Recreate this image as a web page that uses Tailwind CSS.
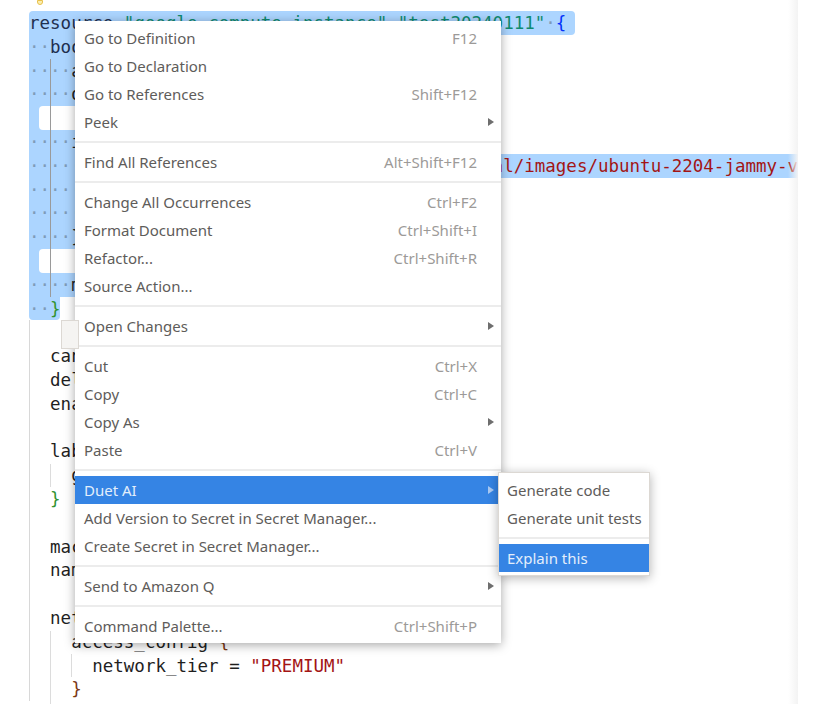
<!DOCTYPE html>
<html lang="en">
  <head>
    <meta charset="UTF-8" />
    <meta name="viewport" content="width=device-width, initial-scale=1.0" />
    <script src="https://cdn.jsdelivr.net/npm/@tailwindcss/browser@4"></script>
    <title>Context menu</title>
  </head>
  <body class="bg-white">
    <div class="relative h-[704px] w-[814px] overflow-hidden bg-white">
      <!-- lightbulb -->
      <div class="absolute left-[37px] top-0 h-[5px] w-[6px] rounded-b-sm border border-[#e8c04a] bg-[#fbeeb0]"></div>

      <!-- editor -->
      <div class="relative ml-[29px] h-[704px] w-[769px] pt-[11px] font-['DejaVu_Sans_Mono',monospace] text-[17.5px] leading-[25px] text-[#1f1f1f]">
        <div class="h-[23.8px] w-[546px] whitespace-pre rounded-t-sm rounded-r-sm bg-[#acd5ff]"><span class="text-[#1f2f4f]">resource</span><span class="text-[#7f9bb8]">·</span><span class="text-[#0f8a6f]">"google_compute_instance"</span><span class="text-[#7f9bb8]">·</span><span class="text-[#0f8a6f]">"test20240111"</span><span class="text-[#7f9bb8]">·</span><span class="text-[#0431fa]">{</span></div>
        <div class="h-[23.8px] w-[460px] whitespace-pre bg-[#acd5ff]"><span class="text-[#7f9bb8]">··</span><span class="text-[#1f2f4f]">boot_disk</span></div>
        <div class="h-[23.8px] w-[460px] whitespace-pre bg-[#acd5ff]"><span class="text-[#7f9bb8]">····</span>auto_delete</div>
        <div class="h-[23.8px] w-[460px] whitespace-pre bg-[#acd5ff]"><span class="text-[#7f9bb8]">····</span>device_name</div>
        <div class="relative h-[23.8px] w-[460px] whitespace-pre bg-[#acd5ff]"><div class="absolute left-[10px] top-0 h-[23.8px] w-[60px] rounded-l-sm bg-white"></div></div>
        <div class="h-[23.8px] w-[460px] whitespace-pre bg-[#acd5ff]"><span class="text-[#7f9bb8]">····</span>initialize_params</div>
        <div class="h-[23.8px] w-[769px] overflow-hidden whitespace-pre bg-[#acd5ff]"><span class="text-[#7f9bb8]">······</span>image = <span class="text-[#a31515]">"projects/ubuntu-os-cloud/global/images/ubuntu-2204-jammy-v</span></div>
        <div class="h-[23.8px] w-[460px] whitespace-pre bg-[#acd5ff]"><span class="text-[#7f9bb8]">······</span>size</div>
        <div class="h-[23.8px] w-[460px] whitespace-pre bg-[#acd5ff]"><span class="text-[#7f9bb8]">······</span>type</div>
        <div class="h-[23.8px] w-[460px] whitespace-pre bg-[#acd5ff]"><span class="text-[#7f9bb8]">····</span>}</div>
        <div class="relative h-[23.8px] w-[460px] whitespace-pre bg-[#acd5ff]"><div class="absolute left-[10px] top-0 h-[23.8px] w-[60px] rounded-l-sm bg-white"></div></div>
        <div class="h-[23.8px] w-[460px] whitespace-pre bg-[#acd5ff]"><span class="text-[#7f9bb8]">····</span>mode</div>
        <div class="h-[23.8px] w-[31px] whitespace-pre rounded-b-sm bg-[#acd5ff]"><span class="text-[#7f9bb8]">··</span><span class="text-[#319331]">}</span></div>
        <div class="h-[23.8px] whitespace-pre border-l border-[#d8d8d8] indent-[-1px]"></div>
        <div class="h-[23.8px] whitespace-pre border-l border-[#d8d8d8] indent-[-1px]">  can_ip_forward = false</div>
        <div class="h-[23.8px] whitespace-pre border-l border-[#d8d8d8] indent-[-1px]">  deletion_protection = false</div>
        <div class="h-[23.8px] whitespace-pre border-l border-[#d8d8d8] indent-[-1px]">  enable_display = false</div>
        <div class="h-[23.8px] whitespace-pre border-l border-[#d8d8d8] indent-[-1px]"></div>
        <div class="h-[23.8px] whitespace-pre border-l border-[#d8d8d8] indent-[-1px]">  labels = {</div>
        <div class="h-[23.8px] whitespace-pre border-l border-[#d8d8d8] indent-[-1px]">    goog-ec-src = "vm_add-tf"</div>
        <div class="h-[23.8px] whitespace-pre border-l border-[#d8d8d8] indent-[-1px]">  <span class="text-[#319331]">}</span></div>
        <div class="h-[23.8px] whitespace-pre border-l border-[#d8d8d8] indent-[-1px]"></div>
        <div class="h-[23.8px] whitespace-pre border-l border-[#d8d8d8] indent-[-1px]">  machine_type = "e2-medium"</div>
        <div class="h-[23.8px] whitespace-pre border-l border-[#d8d8d8] indent-[-1px]">  name = "test20240111"</div>
        <div class="h-[23.8px] whitespace-pre border-l border-[#d8d8d8] indent-[-1px]"></div>
        <div class="h-[23.8px] whitespace-pre border-l border-[#d8d8d8] indent-[-1px]">  network_interface {</div>
        <div class="h-[23.8px] whitespace-pre border-l border-[#d8d8d8] indent-[-1px]">    access_config <span class="text-[#7b3814]">{</span></div>
        <div class="h-[23.8px] whitespace-pre border-l border-[#d8d8d8] indent-[-1px]">      network_tier = <span class="text-[#a31515]">"PREMIUM"</span></div>
        <div class="h-[23.8px] whitespace-pre border-l border-[#d8d8d8] indent-[-1px]">    <span class="text-[#7b3814]">}</span></div>

        <!-- indent guides -->
        <div class="absolute left-[21px] top-[59px] h-[238px] w-px bg-[#9a9a9a]"></div>
        <div class="absolute left-[21px] top-[464px] h-[23px] w-px bg-[#dcdcdc]"></div>
        <div class="absolute left-[21px] top-[631px] h-[73px] w-px bg-[#dcdcdc]"></div>
        <div class="absolute left-[42px] top-[654px] h-[23px] w-px bg-[#dcdcdc]"></div>

        <!-- right edge -->
        <div class="absolute right-0 top-0 h-[704px] w-[10px] bg-linear-to-r from-transparent to-[#f3f3f3]"></div>
      </div>

      <!-- folded block widget -->
      <div class="absolute left-[60px] top-[297px] h-[24px] w-[20px] rounded-tl-sm bg-white"></div>

      <!-- context menu -->
      <div class="absolute left-[75px] top-[21px] w-[426px] bg-white py-[3px] font-['Noto_Sans',sans-serif] text-[15px] text-[#5e5c5a] shadow-[0_2px_10px_rgba(0,0,0,0.35)]">
        <div class="flex h-7 items-center justify-between pl-[9px] pr-6"><span>Go to Definition</span><span class="text-[#9c9a98]">F12</span></div>
        <div class="flex h-7 items-center justify-between pl-[9px] pr-6"><span>Go to Declaration</span></div>
        <div class="flex h-7 items-center justify-between pl-[9px] pr-6"><span>Go to References</span><span class="text-[#9c9a98]">Shift+F12</span></div>
        <div class="flex h-7 items-center justify-between pl-[9px] pr-[7px]"><span>Peek</span><svg width="6" height="8" viewBox="0 0 6 8"><path d="M0 0L6 4L0 8Z" fill="#6e6e6e" /></svg></div>
        <div class="my-[5px] h-0.5 bg-[#ececec]"></div>
        <div class="flex h-7 items-center justify-between pl-[9px] pr-6"><span>Find All References</span><span class="text-[#9c9a98]">Alt+Shift+F12</span></div>
        <div class="my-[5px] h-0.5 bg-[#ececec]"></div>
        <div class="flex h-7 items-center justify-between pl-[9px] pr-6"><span>Change All Occurrences</span><span class="text-[#9c9a98]">Ctrl+F2</span></div>
        <div class="flex h-7 items-center justify-between pl-[9px] pr-6"><span>Format Document</span><span class="text-[#9c9a98]">Ctrl+Shift+I</span></div>
        <div class="flex h-7 items-center justify-between pl-[9px] pr-6"><span>Refactor...</span><span class="text-[#9c9a98]">Ctrl+Shift+R</span></div>
        <div class="flex h-7 items-center justify-between pl-[9px] pr-6"><span>Source Action...</span></div>
        <div class="my-[5px] h-0.5 bg-[#ececec]"></div>
        <div class="flex h-7 items-center justify-between pl-[9px] pr-[7px]"><span>Open Changes</span><svg width="6" height="8" viewBox="0 0 6 8"><path d="M0 0L6 4L0 8Z" fill="#6e6e6e" /></svg></div>
        <div class="my-[5px] h-0.5 bg-[#ececec]"></div>
        <div class="flex h-7 items-center justify-between pl-[9px] pr-6"><span>Cut</span><span class="text-[#9c9a98]">Ctrl+X</span></div>
        <div class="flex h-7 items-center justify-between pl-[9px] pr-6"><span>Copy</span><span class="text-[#9c9a98]">Ctrl+C</span></div>
        <div class="flex h-7 items-center justify-between pl-[9px] pr-[7px]"><span>Copy As</span><svg width="6" height="8" viewBox="0 0 6 8"><path d="M0 0L6 4L0 8Z" fill="#6e6e6e" /></svg></div>
        <div class="flex h-7 items-center justify-between pl-[9px] pr-6"><span>Paste</span><span class="text-[#9c9a98]">Ctrl+V</span></div>
        <div class="my-[5px] h-0.5 bg-[#ececec]"></div>
        <div class="flex h-7 items-center justify-between bg-[#3584e4] pl-[9px] pr-[7px] text-[#e3eefb]"><span>Duet AI</span><svg width="6" height="8" viewBox="0 0 6 8"><path d="M0 0L6 4L0 8Z" fill="#a9c9f2" /></svg></div>
        <div class="flex h-7 items-center justify-between pl-[9px] pr-6"><span>Add Version to Secret in Secret Manager...</span></div>
        <div class="flex h-7 items-center justify-between pl-[9px] pr-6"><span>Create Secret in Secret Manager...</span></div>
        <div class="my-[5px] h-0.5 bg-[#ececec]"></div>
        <div class="flex h-7 items-center justify-between pl-[9px] pr-[7px]"><span>Send to Amazon Q</span><svg width="6" height="8" viewBox="0 0 6 8"><path d="M0 0L6 4L0 8Z" fill="#6e6e6e" /></svg></div>
        <div class="my-[5px] h-0.5 bg-[#ececec]"></div>
        <div class="flex h-7 items-center justify-between pl-[9px] pr-6"><span>Command Palette...</span><span class="text-[#9c9a98]">Ctrl+Shift+P</span></div>
      </div>

      <!-- tooltip stub over the menu edge -->
      <div class="absolute left-[61px] top-[320px] h-[29px] w-[18px] border border-[#dcd8d3] bg-[#f5f4f2]"></div>

      <!-- submenu -->
      <div class="absolute left-[498px] top-[472px] w-[152px] border border-[#dcd8d3] bg-white py-[3px] font-['Noto_Sans',sans-serif] text-[15px] text-[#5e5c5a] shadow-[0_2px_10px_rgba(0,0,0,0.3)]">
        <div class="flex h-7 items-center pl-2"><span>Generate code</span></div>
        <div class="flex h-7 items-center pl-2"><span>Generate unit tests</span></div>
        <div class="my-[5px] h-0.5 bg-[#ececec]"></div>
        <div class="flex h-7 items-center bg-[#3584e4] pl-2 text-[#e3eefb]"><span>Explain this</span></div>
      </div>
    </div>
  </body>
</html>
